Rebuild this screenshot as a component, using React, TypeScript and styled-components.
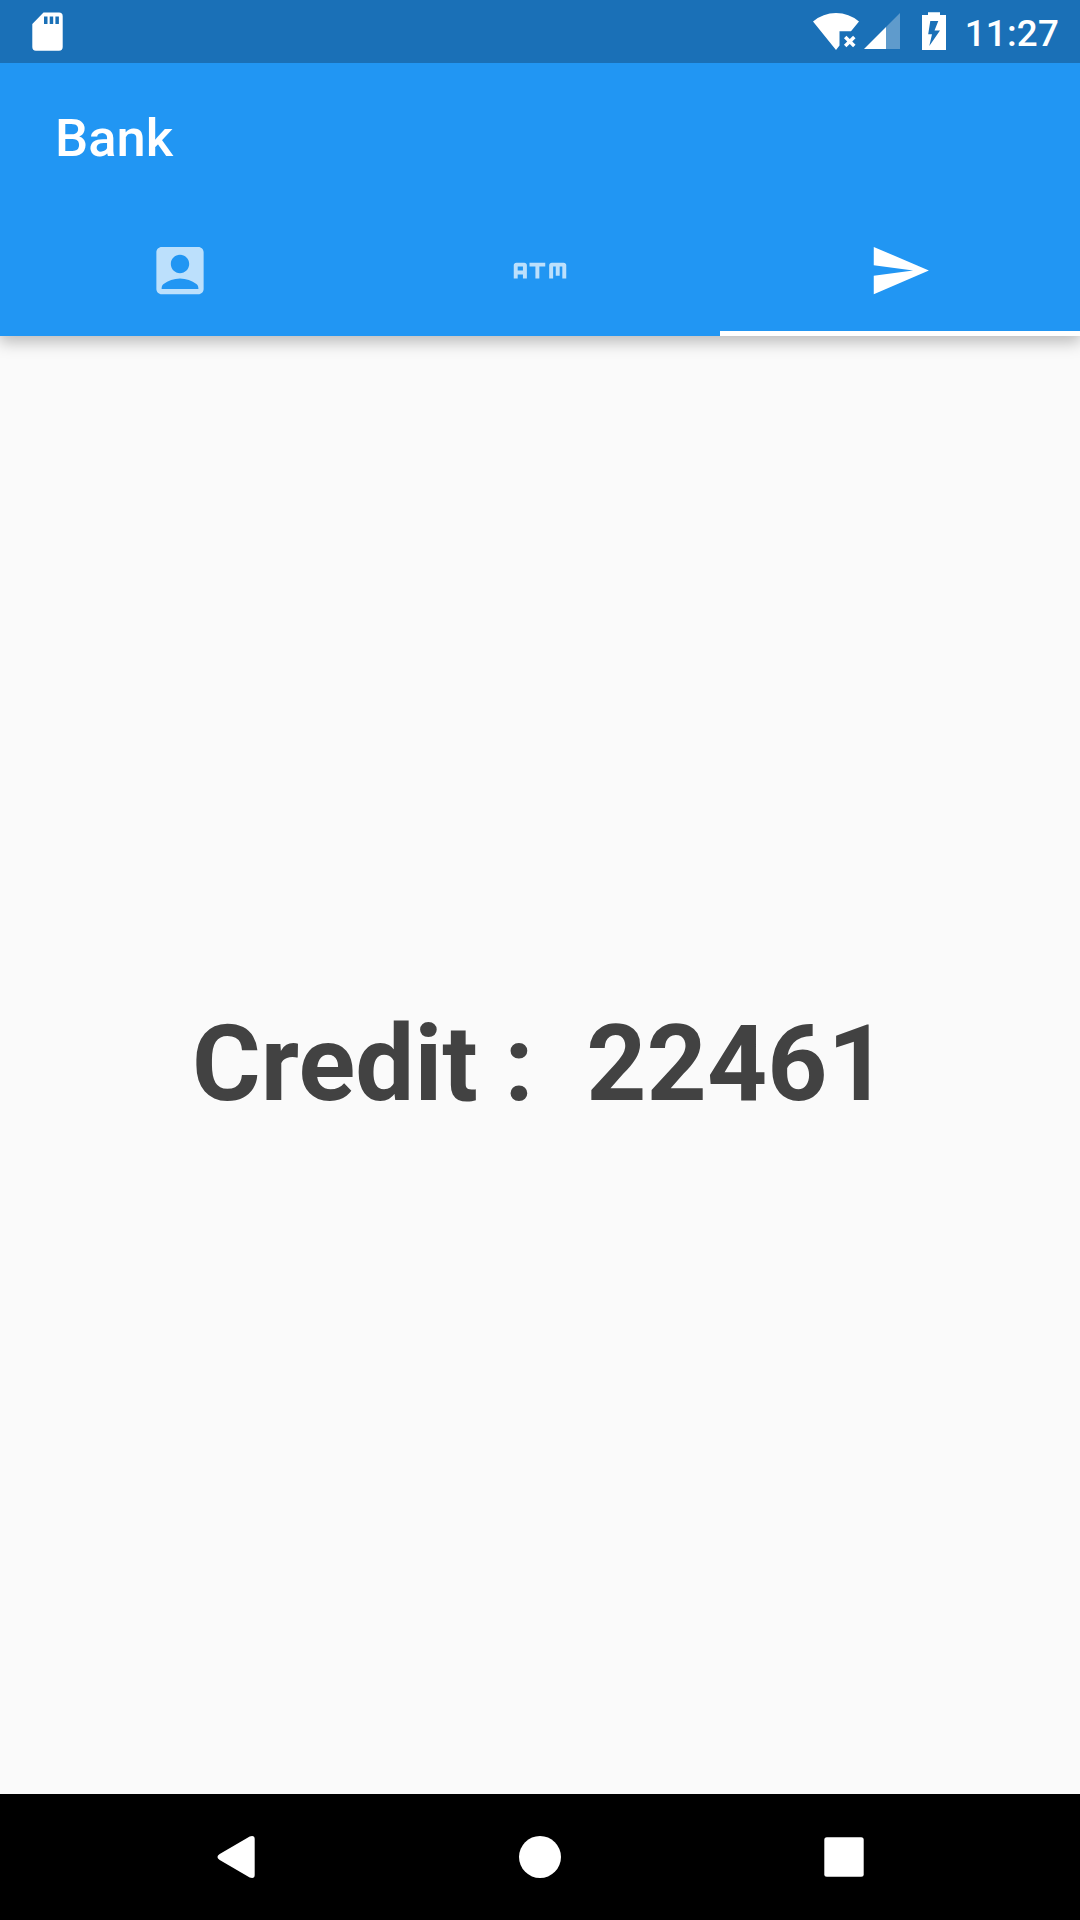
import React from 'react';
import styled, { createGlobalStyle } from 'styled-components';
import { MdAccountBox, MdAtm, MdSend } from 'react-icons/md';

const GlobalStyle = createGlobalStyle`
  *, *::before, *::after { box-sizing: border-box; }
  body { margin: 0; font-family: Roboto, sans-serif; }
`;

const Screen = styled.div`
  display: flex;
  flex-direction: column;
  width: 1080px;
  height: 1920px;
  overflow: hidden;
  background: #fafafa;
`;

const StatusBar = styled.div`
  z-index: 2;
  display: flex;
  flex: none;
  justify-content: space-between;
  height: 63px;
  padding: 0 21px 0 32px;
  background: #1a70b7;
  color: #fff;
`;

const StatusGroup = styled.div`
  display: flex;
  align-items: flex-start;
`;

const StatusIcon = styled.svg<{ $gap?: number }>`
  display: block;
  flex: none;
  margin-top: 12px;
  margin-right: ${({ $gap = 0 }) => $gap}px;
  fill: #fff;
`;

const Clock = styled.time`
  font-size: 36.75px;
  font-weight: 500;
  letter-spacing: 0.2px;
  line-height: 43px;
  margin-top: 12px;
`;

const AppBar = styled.header`
  z-index: 1;
  flex: none;
  height: 273px;
  background: #2196f3;
  box-shadow: 0 5px 15px 1px rgba(0, 0, 0, 0.26);
`;

const Title = styled.h1`
  display: flex;
  align-items: center;
  height: 147px;
  margin: 0;
  padding: 2px 0 0 55px;
  color: #fff;
  font-size: 52.5px;
  font-weight: 500;
  line-height: 62px;
`;

const Tabs = styled.nav`
  display: grid;
  grid-template-columns: repeat(3, 1fr);
  height: 126px;
`;

const Tab = styled.div<{ $active?: boolean }>`
  display: flex;
  align-items: center;
  justify-content: center;
  border-bottom: 5.25px solid ${({ $active }) => ($active ? '#fff' : 'transparent')};
  color: ${({ $active }) => ($active ? '#fff' : 'rgba(255, 255, 255, 0.7)')};

  svg {
    width: 64px;
    height: 64px;
    padding: 0 0.5px 1px;
  }
`;

const Content = styled.main`
  display: flex;
  flex: 1;
  align-items: center;
  justify-content: center;
  padding-bottom: 2px;
`;

const Credit = styled.p`
  margin: 0;
  color: #424242;
  font-size: 105px;
  font-weight: 700;
  letter-spacing: 0.1px;
  line-height: 123px;
  white-space: pre;
`;

const NavBar = styled.footer`
  display: flex;
  flex: none;
  align-items: center;
  justify-content: center;
  gap: 178px;
  height: 126px;
  background: #000;
`;

const NavButton = styled.svg`
  width: 126px;
  height: 126px;
  fill: #fff;
`;

export default function App() {
  return (
    <>
      <GlobalStyle />
      <Screen>
        <StatusBar>
          <StatusGroup>
            <StatusIcon width="31" height="39" viewBox="0 0 31 39">
              <path
                fillRule="evenodd"
                d="M11.5 .5H27a3.700 3.700 0 0 1 3.700 3.700V35a3.700 3.700 0 0 1-3.700 3.700H4A3.700 3.700 0 0 1 .3 35V12zM12 4.500V12h3.500V4.500zM17.700 4.500V12h3.500V4.500zM23.400 4.500V12h3.500V4.500z"
              />
            </StatusIcon>
          </StatusGroup>
          <StatusGroup>
            <StatusIcon $gap={5} width="46" height="38" viewBox="0 0 46 38">
              <path d="M0 9.500Q10 1 23 1T46 9.500L38 19.200H26.500V33.500L23 38z" />
              <path d="M32.200 25L41.300 34M41.300 25L32.200 34" stroke="#fff" strokeWidth="3.500" />
            </StatusIcon>
            <StatusIcon $gap={22} width="36" height="38" viewBox="0 0 36 38">
              <path d="M36 1V37H22V15z" opacity=".3" />
              <path d="M22 15V37H0z" />
            </StatusIcon>
            <StatusIcon $gap={19} width="24" height="38" viewBox="0 0 24 38">
              <path
                fillRule="evenodd"
                d="M6 .3H18V3H24V38H0V3H6zM8.300 9L6.200 22.300H10L7.300 34L18 18.500H12.500L16.300 9z"
              />
            </StatusIcon>
            <Clock>11:27</Clock>
          </StatusGroup>
        </StatusBar>
        <AppBar>
          <Title>Bank</Title>
          <Tabs>
            <Tab><MdAccountBox /></Tab>
            <Tab><MdAtm /></Tab>
            <Tab $active><MdSend /></Tab>
          </Tabs>
        </AppBar>
        <Content>
          <Credit>{'Credit :  22461'}</Credit>
        </Content>
        <NavBar>
          <NavButton viewBox="0 0 126 126">
            <path d="M46.700 60L76.700 42.500Q81.700 41 81.700 45V81Q81.700 85 76.700 83.500L46.700 66Q42.200 63 46.700 60z" />
          </NavButton>
          <NavButton viewBox="0 0 126 126">
            <circle cx="63" cy="63" r="21" />
          </NavButton>
          <NavButton viewBox="0 0 126 126">
            <rect x="43.300" y="43.300" width="39.400" height="39.400" rx="2.500" />
          </NavButton>
        </NavBar>
      </Screen>
    </>
  );
}
